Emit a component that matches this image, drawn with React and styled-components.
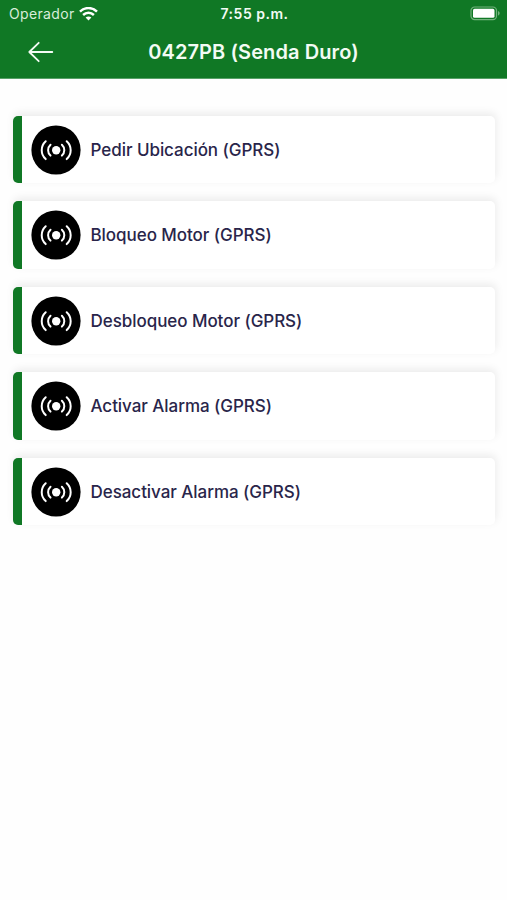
import React from 'react'
import styled, { createGlobalStyle } from 'styled-components'

const GREEN = '#107825'

const GlobalStyle = createGlobalStyle`
  body {
    margin     : 0;
    background : #fefefe;
    font-family: Inter, 'Liberation Sans', sans-serif;
  }
`

const Screen = styled.div`
  min-height: 900px;
  overflow  : hidden;
`

const Header = styled.header`
  height       : 78px;
  background   : ${GREEN};
  border-bottom: 1px solid #57a167;
  color        : #f3fbf4;
`

const StatusBar = styled.div`
  display              : grid;
  grid-template-columns: 1fr auto 1fr;
  align-items          : center;
  height               : 27px;
  padding              : 0 7px 0 9px;
  box-sizing           : border-box;
`

const Carrier = styled.div`
  display       : flex;
  align-items   : center;
  gap           : 4px;
  font-size     : 14px;
  line-height   : 18px;
  letter-spacing: 0.35px;
  color         : #d8edda;
`

const Clock = styled.div`
  font-size     : 14px;
  line-height   : 18px;
  font-weight   : 600;
  letter-spacing: 0.5px;
`

const StyledBattery = styled.svg`
  justify-self: end;
`

const NavBar = styled.div`
  display              : grid;
  grid-template-columns: 74px 1fr 74px;
  align-items          : center;
  height               : 50px;
`

const BackButton = styled.button`
  display   : flex;
  padding   : 0 0 0 27px;
  border    : 0;
  background: none;
  cursor    : pointer;
`

const Title = styled.h1`
  margin        : 0;
  font-size     : 20px;
  line-height   : 24px;
  font-weight   : 600;
  letter-spacing: 0.1px;
  text-align    : center;
  white-space   : nowrap;
`

const CommandList = styled.main`
  display       : flex;
  flex-direction: column;
  gap           : 18px;
  padding       : 36.5px 12px 0 13px;
`

const Command = styled.div`
  display      : flex;
  align-items  : center;
  gap          : 9.5px;
  height       : 67.5px;
  padding      : 1px 0 0 9px;
  box-sizing   : border-box;
  border-left  : 9px solid ${GREEN};
  border-radius: 5px;
  background   : #fff;
  box-shadow   : 1px -3px 9px rgba(0, 0, 0, 0.08);
`

const CommandLabel = styled.span`
  font-size     : 17px;
  line-height   : 22px;
  font-weight   : 500;
  letter-spacing: -0.05px;
  color         : #29254a;
`

const commands = [
  'Pedir Ubicación (GPRS)',
  'Bloqueo Motor (GPRS)',
  'Desbloqueo Motor (GPRS)',
  'Activar Alarma (GPRS)',
  'Desactivar Alarma (GPRS)'
]

function WifiIcon() {
  return (
    <svg width='19' height='14' viewBox='0 0 19 14' fill='none' stroke='#fff' strokeWidth='2.5'>
      <path d='M1 4.6C5.8-.1 13.2-.1 18 4.6' />
      <path d='M4.1 8c3.1-2.9 7.7-2.9 10.8 0' />
      <path d='M9.5 13.4 6.6 10.5c1.7-1.5 4.1-1.5 5.8 0z' fill='#fff' stroke='none' />
    </svg>
  )
}

function BatteryIcon() {
  return (
    <StyledBattery width='30' height='15' viewBox='0 0 30 15'>
      <rect x='1' y='1' width='25.5' height='12.6' rx='3.6' fill='none' stroke='#72b27d' strokeWidth='1.2' />
      <rect x='3' y='2.8' width='21.5' height='9' rx='1.6' fill='#fff' />
      <path d='M28 5c2.2.8 2.2 3.8 0 4.6z' fill='#72b27d' />
    </StyledBattery>
  )
}

function ArrowIcon() {
  return (
    <svg width='27' height='22' viewBox='0 0 27 22' fill='none' stroke='#f3fbf4' strokeWidth='1.8' strokeLinecap='round' strokeLinejoin='round'>
      <path d='M25.3 11H2.3M11.7 1.8 2.3 11l9.4 9.2' />
    </svg>
  )
}

function SignalIcon() {
  return (
    <svg width='50' height='50' viewBox='0 0 50 50' fill='none' stroke='#fff' strokeWidth='2' strokeLinecap='round'>
      <circle cx='25' cy='25' r='24.6' fill='#000' stroke='none' />
      <circle cx='25.2' cy='25.2' r='4.2' fill='#fff' stroke='none' />
      <path d='M19.5 19.8c-3.2 3-3.2 7.8 0 10.8M30.9 19.8c3.2 3 3.2 7.8 0 10.8' />
      <path d='M14.7 16.3c-5.3 5-5.3 12.8 0 17.8M35.7 16.3c5.3 5 5.3 12.8 0 17.8' />
    </svg>
  )
}

export default function App() {
  return (
    <Screen>
      <GlobalStyle />
      <Header>
        <StatusBar>
          <Carrier>
            Operador
            <WifiIcon />
          </Carrier>
          <Clock>7:55 p.m.</Clock>
          <BatteryIcon />
        </StatusBar>
        <NavBar>
          <BackButton aria-label='Volver'>
            <ArrowIcon />
          </BackButton>
          <Title>0427PB (Senda Duro)</Title>
        </NavBar>
      </Header>
      <CommandList>
        {commands.map(label => (
          <Command key={label}>
            <SignalIcon />
            <CommandLabel>{label}</CommandLabel>
          </Command>
        ))}
      </CommandList>
    </Screen>
  )
}
